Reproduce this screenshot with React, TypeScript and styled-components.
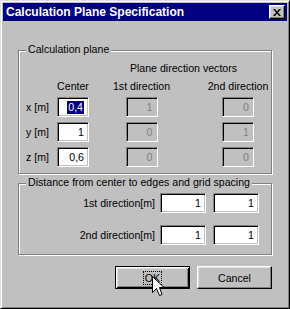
import { Fragment } from 'react';
import styled, { createGlobalStyle } from 'styled-components';

const GlobalStyle = createGlobalStyle`
  html, body {
    margin: 0;
    padding: 0;
    background: #c0c0c0;
  }
`;

const Window = styled.div`
  box-sizing: border-box;
  width: 290px;
  height: 309px;
  padding: 2px;
  background: #c0c0c0;
  border: 1px solid;
  border-color: #dfdfdf #000 #000 #dfdfdf;
  box-shadow: inset 1px 1px 0 #fff, inset -1px -1px 0 #808080;
  font-family: 'Liberation Sans', Arial, sans-serif;
  font-size: 10.6px;
  color: #000;
`;

const TitleBar = styled.div`
  display: flex;
  align-items: center;
  justify-content: space-between;
  height: 18px;
  padding: 0 2px 0 3px;
  background: #000080;
`;

const Title = styled.span`
  color: #fff;
  font-size: 12px;
  font-weight: bold;
  line-height: 18px;
  white-space: nowrap;
`;

const CloseButton = styled.button`
  box-sizing: border-box;
  display: flex;
  align-items: center;
  justify-content: center;
  width: 16px;
  height: 14px;
  padding: 0;
  background: #c0c0c0;
  border: 1px solid;
  border-color: #fff #000 #000 #fff;
  box-shadow: inset -1px -1px 0 #808080, inset 1px 1px 0 #dfdfdf;
`;

const Body = styled.div`
  display: flex;
  flex-direction: column;
  padding: 29px 15px 0;
`;

const Group = styled.div`
  position: relative;
  border: 1px solid #808080;
  box-shadow: 1px 1px 0 #fff, inset 1px 1px 0 #fff;

  & + & {
    margin-top: 9px;
  }
`;

const GroupCaption = styled.span`
  position: absolute;
  top: -8px;
  left: 7px;
  padding: 0 2px;
  line-height: 13px;
  background: #c0c0c0;
  white-space: nowrap;
`;

const PlaneBody = styled.div`
  display: flex;
  align-items: flex-end;
  padding: 11px 0 6px 7px;
`;

const LabelColumn = styled.div`
  display: flex;
  flex-direction: column;
  gap: 5px;
  width: 31px;
`;

const RowLabel = styled.span`
  line-height: 20px;
  white-space: nowrap;
`;

const FieldColumn = styled.div<{ $width: number }>`
  display: flex;
  flex-direction: column;
  align-items: center;
  gap: 5px;
  width: ${p => p.$width}px;
`;

const ColumnHeader = styled.span`
  line-height: 12px;
  white-space: nowrap;
`;

const Vectors = styled.div`
  display: flex;
  flex-direction: column;
  margin-left: 24px;
`;

const VectorsCaption = styled.span`
  margin-bottom: 6px;
  padding-right: 14px;
  line-height: 12px;
  text-align: center;
  white-space: nowrap;
`;

const VectorColumns = styled.div`
  display: flex;
  gap: 38px;
`;

const Field = styled.div<{ $width?: number; $disabled?: boolean }>`
  box-sizing: border-box;
  width: ${p => p.$width ?? 32}px;
  height: 20px;
  padding-right: 4px;
  background: ${p => (p.$disabled ? '#c0c0c0' : '#fff')};
  color: ${p => (p.$disabled ? '#808080' : '#000')};
  border: 1px solid;
  border-color: #808080 #fff #fff #808080;
  box-shadow: inset 1px 1px 0 #000, inset -1px -1px 0 #c0c0c0;
  line-height: 18px;
  text-align: right;
  white-space: nowrap;
`;

const Selection = styled.span`
  display: inline-block;
  padding: 0 1px;
  line-height: 13px;
  background: #000080;
  color: #fff;
`;

const SpacingBody = styled.div`
  display: grid;
  grid-template-columns: 1fr 46px 46px;
  column-gap: 7px;
  row-gap: 12px;
  align-items: center;
  padding: 9px 12px 9px 0;
`;

const SpacingLabel = styled.span`
  margin-right: -2px;
  text-align: right;
  white-space: nowrap;
`;

const ButtonRow = styled.div`
  display: flex;
  justify-content: flex-end;
  gap: 7px;
  margin-top: 11px;
`;

const Button = styled.button<{ $default?: boolean }>`
  position: relative;
  box-sizing: border-box;
  width: 75px;
  height: 23px;
  padding: 0;
  background: #c0c0c0;
  font: inherit;
  color: #000;
  border: 1px solid;
  border-color: ${p => (p.$default ? '#000' : '#fff #000 #000 #fff')};
  box-shadow: ${p =>
    p.$default
      ? 'inset 1px 1px 0 #fff, inset -1px -1px 0 #000, inset 2px 2px 0 #dfdfdf, inset -2px -2px 0 #808080'
      : 'inset -1px -1px 0 #808080, inset 1px 1px 0 #dfdfdf'};
`;

const FocusLabel = styled.span`
  padding: 0 1px;
  outline: 1px dotted #000;
  outline-offset: 0;
`;

const Pointer = styled.svg`
  position: absolute;
  left: 36px;
  top: 9px;
  pointer-events: none;
`;

const CloseGlyph = () => (
  <svg width="8" height="7" viewBox="0 0 8 7">
    <path d="M0 0h2l2 2.5L6 0h2L5 3.5 8 7H6L4 4.5 2 7H0l3-3.5z" fill="#000" />
  </svg>
);

const ArrowCursor = () => (
  <Pointer width="13" height="22" viewBox="0 0 13 22">
    <path
      d="M0.5 0.5V16.5L4.5 12.5L7.5 19.5L10 18.5L7.5 11.5H12Z"
      fill="#fff"
      stroke="#000"
      strokeWidth="1"
      strokeLinejoin="miter"
    />
  </Pointer>
);

const axes = [
  { label: 'x [m]', center: '0,4', first: '1', second: '0' },
  { label: 'y [m]', center: '1', first: '0', second: '1' },
  { label: 'z [m]', center: '0,6', first: '0', second: '0' },
];

const spacing = [
  { label: '1st direction[m]', a: '1', b: '1' },
  { label: '2nd direction[m]', a: '1', b: '1' },
];

export default function App() {
  return (
    <>
      <GlobalStyle />
      <Window>
        <TitleBar>
          <Title>Calculation Plane Specification</Title>
          <CloseButton aria-label="Close">
            <CloseGlyph />
          </CloseButton>
        </TitleBar>
        <Body>
          <Group>
            <GroupCaption>Calculation plane</GroupCaption>
            <PlaneBody>
              <LabelColumn>
                {axes.map(a => (
                  <RowLabel key={a.label}>{a.label}</RowLabel>
                ))}
              </LabelColumn>
              <FieldColumn $width={32}>
                <ColumnHeader>Center</ColumnHeader>
                {axes.map((a, i) => (
                  <Field key={a.label}>
                    {i === 0 ? <Selection>{a.center}</Selection> : a.center}
                  </Field>
                ))}
              </FieldColumn>
              <Vectors>
                <VectorsCaption>Plane direction vectors</VectorsCaption>
                <VectorColumns>
                  <FieldColumn $width={57}>
                    <ColumnHeader>1st direction</ColumnHeader>
                    {axes.map(a => (
                      <Field key={a.label} $disabled>
                        {a.first}
                      </Field>
                    ))}
                  </FieldColumn>
                  <FieldColumn $width={60}>
                    <ColumnHeader>2nd direction</ColumnHeader>
                    {axes.map(a => (
                      <Field key={a.label} $disabled>
                        {a.second}
                      </Field>
                    ))}
                  </FieldColumn>
                </VectorColumns>
              </Vectors>
            </PlaneBody>
          </Group>
          <Group>
            <GroupCaption>Distance from center to edges and grid spacing</GroupCaption>
            <SpacingBody>
              {spacing.map(s => (
                <Fragment key={s.label}>
                  <SpacingLabel>{s.label}</SpacingLabel>
                  <Field $width={46}>{s.a}</Field>
                  <Field $width={46}>{s.b}</Field>
                </Fragment>
              ))}
            </SpacingBody>
          </Group>
          <ButtonRow>
            <Button $default>
              <FocusLabel>OK</FocusLabel>
              <ArrowCursor />
            </Button>
            <Button>Cancel</Button>
          </ButtonRow>
        </Body>
      </Window>
    </>
  );
}
